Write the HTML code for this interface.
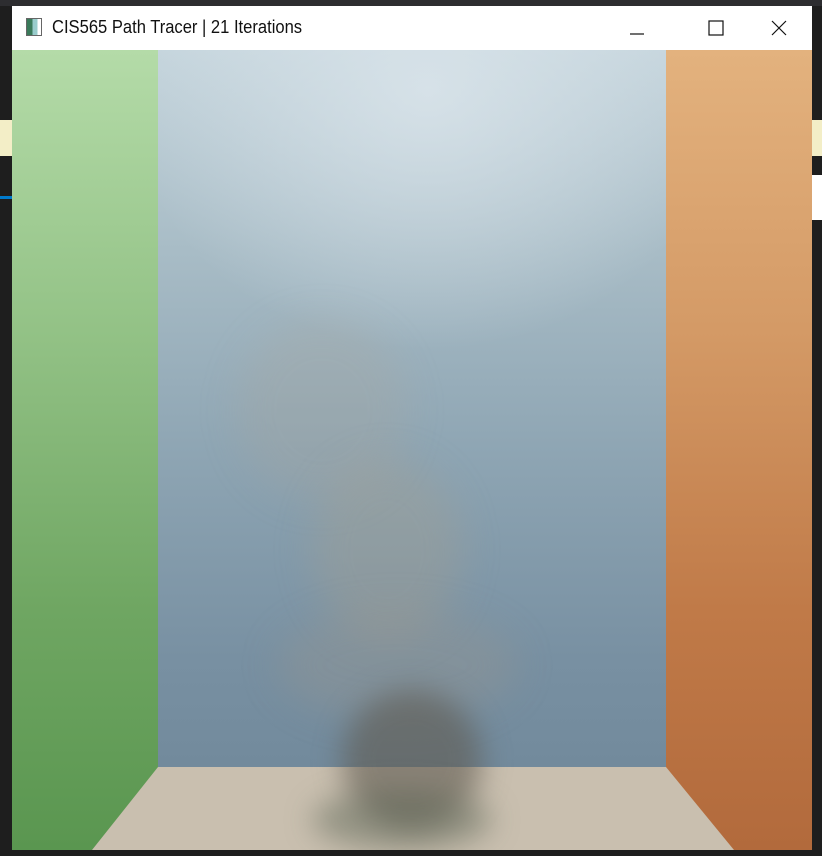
<!DOCTYPE html>
<html><head><meta charset="utf-8"><style>
*{margin:0;padding:0;box-sizing:border-box}
body{width:822px;height:856px;background:#1e1e1e;position:relative;overflow:hidden;font-family:"Liberation Sans",sans-serif}
.abs{position:absolute}
#top{left:0;top:0;width:822px;height:6px;background:#2d2d30}
#title{left:12px;top:6px;width:800px;height:44px;background:#fff}
#title .t{position:absolute;left:40px;top:11px;font-size:18px;color:#111;transform:scaleX(0.92);transform-origin:left}
#ico{left:14px;top:12px;width:16px;height:18px;border:1px solid #666;background:linear-gradient(90deg,#3a7a5a 0 40%,#9cc 40% 75%,#fff 75%)}
#scene{left:12px;top:50px;width:800px;height:800px;overflow:hidden}
#lw{left:0;top:0;width:146px;height:800px;background:linear-gradient(180deg,#b4dba8 0%,#93c286 35%,#6fa662 70%,#5a9650 100%)}
#bw{left:146px;top:0;width:508px;height:717px;background:linear-gradient(180deg,#c4d4dc 0%,#a8bcc6 28%,#8fa6b4 55%,#7890a2 85%,#728a9c 100%)}
#bw2{left:146px;top:0;width:508px;height:400px;background:radial-gradient(ellipse 300px 260px at 270px 40px,rgba(220,230,236,0.8) 0%,rgba(220,230,236,0) 100%)}
#rw{left:654px;top:0;width:146px;height:800px;background:linear-gradient(180deg,#e3b27e 0%,#d49a66 35%,#c07a48 70%,#b26a3c 100%)}
#fl{left:0;top:717px;width:800px;height:83px;background:#c9bfaf;clip-path:polygon(146px 0,654px 0,722px 83px,80px 83px)}
.smoke{position:absolute;border-radius:50%;filter:blur(18px)}
</style></head><body>
<div class="abs" id="top"></div>
<div class="abs" style="left:0;top:120px;width:12px;height:36px;background:#f3eec7"></div>
<div class="abs" style="left:812px;top:120px;width:10px;height:36px;background:#f3eec7"></div>
<div class="abs" style="left:0;top:196px;width:12px;height:3px;background:#007acc"></div>
<div class="abs" style="left:812px;top:175px;width:10px;height:45px;background:#fff"></div>
<div class="abs" id="title"><div class="abs" id="ico" style="left:14px;top:12px"></div><span class="t">CIS565 Path Tracer | 21 Iterations</span>
<svg class="abs" style="left:610px;top:10px" width="190" height="24"><line x1="8" y1="18" x2="22" y2="18" stroke="#111" stroke-width="1.2"/><rect x="87" y="5" width="14" height="14" fill="none" stroke="#111" stroke-width="1.2"/><path d="M150 5L164 19M164 5L150 19" stroke="#111" stroke-width="1.2"/></svg>
</div>
<div class="abs" id="scene">
<div class="abs" id="lw"></div>
<div class="abs" id="bw"></div>
<div class="abs" id="bw2"></div>
<div class="abs" id="rw"></div>
<div class="abs" id="fl"></div>
<div class="smoke" style="left:225px;top:270px;width:170px;height:180px;background:rgba(175,165,150,0.22)"></div>
<div class="smoke" style="left:300px;top:410px;width:150px;height:180px;background:rgba(170,158,140,0.3)"></div>
<div class="smoke" style="left:265px;top:560px;width:240px;height:110px;background:rgba(165,150,135,0.25)"></div>
<div class="smoke" style="left:330px;top:640px;width:140px;height:140px;background:rgba(95,90,80,0.6);filter:blur(14px)"></div>
<div class="smoke" style="left:300px;top:740px;width:180px;height:60px;background:rgba(85,95,80,0.45);filter:blur(14px)"></div>
</div>
</body></html>
